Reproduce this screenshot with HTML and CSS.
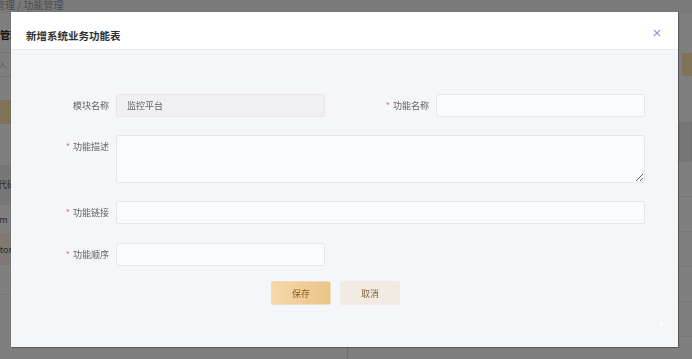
FILE: index.html
```html
<!DOCTYPE html>
<html lang="zh">
<head>
<meta charset="utf-8">
<title>新增系统业务功能表</title>
<link rel="stylesheet" href="styles.css">
</head>
<body>
<div class="page">
  <div class="crumb"><span class="crumb-text">系统管理 / 功能管理</span></div>
  <div class="panels">
    <div class="panel panel-left">
      <div class="p-title"><span class="shift">系统管理</span></div>
      <div class="p-search"><span class="shift ph">请输入</span></div>
      <div class="p-btnrow"><span class="p-btn"></span></div>
      <div class="p-thead"><span class="shift">功能代码</span></div>
      <div class="p-row"><span class="shift2">system</span></div>
      <div class="p-row p-row-hl"><span class="shift2">monitor</span></div>
      <div class="p-row"><span class="shift">业务</span></div>
    </div>
    <div class="panel panel-right">
      <div class="r-top"><span class="r-btn"></span></div>
      <div class="r-thead"></div>
      <div class="r-row"></div>
      <div class="r-row"></div>
      <div class="r-row"></div>
      <div class="r-row"></div>
      <div class="r-row"></div>
    </div>
  </div>
</div>
<div class="overlay"></div>
<div class="dialog">
  <div class="dialog-header">
    <span class="dialog-title">新增系统业务功能表</span>
    <button class="dialog-close" aria-label="关闭">
      <svg width="8" height="8" viewBox="0 0 8 8"><path d="M0.8 0.8 L7.2 7.2 M7.2 0.8 L0.8 7.2" stroke="#8e94dc" stroke-width="1.2" fill="none"/></svg>
    </button>
  </div>
  <div class="dialog-body">
    <form class="form">
      <label class="label">模块名称</label>
      <input class="input input-disabled" value="监控平台" disabled>
      <label class="label"><span class="req">*</span>功能名称</label>
      <input class="input">

      <label class="label"><span class="req">*</span>功能描述</label>
      <textarea class="input textarea span3"></textarea>

      <label class="label"><span class="req">*</span>功能链接</label>
      <input class="input span3">

      <label class="label row4"><span class="req">*</span>功能顺序</label>
      <input class="input row4">
    </form>
    <div class="actions">
      <button class="btn btn-primary" type="button">保存</button>
      <button class="btn btn-cancel" type="button">取消</button>
    </div>
    <span class="dot"></span>
  </div>
</div>
</body>
</html>
```

FILE: styles.css
```css
* { box-sizing: border-box; }
html, body {
  margin: 0;
  padding: 0;
  width: 692px;
  height: 359px;
  overflow: hidden;
  font-family: "Noto Sans CJK SC", "Noto Sans", sans-serif;
  background: #fff;
}

/* ---- background page ---- */
.page { width: 692px; height: 359px; background: #fff; }
.crumb {
  height: 14px;
  background: #f4f4f4;
  font-size: 10px;
  line-height: 10px;
  color: #999;
  overflow: hidden;
  white-space: nowrap;
}
.crumb-text { display: inline-block; margin-left: -25px; margin-top: -3px; }
.panels { display: flex; height: 345px; }
.panel { overflow: hidden; }
.panel-left { width: 348px; border-right: 1px solid #ddd; }
.panel-right { flex: 1; }
.shift { display: inline-block; margin-left: -20px; }
.shift2 { display: inline-block; margin-left: -22px; }
.p-title {
  height: 39px;
  border-bottom: 1px solid #e6e6e6;
  font-size: 10px;
  font-weight: 700;
  color: #222;
  line-height: 42px;
  white-space: nowrap;
}
.p-search {
  height: 24px;
  border-bottom: 1px solid #e6e6e6;
  font-size: 9px;
  line-height: 24px;
  color: #c0c0c0;
  white-space: nowrap;
}
.p-btnrow { height: 88px; padding-top: 23px; }
.p-btn { display: block; width: 60px; height: 24px; background: #ffe6ae; }
.p-thead {
  height: 40px;
  background: #ececec;
  font-size: 9px;
  line-height: 40px;
  color: #555;
  white-space: nowrap;
}
.p-row {
  height: 30px;
  border-bottom: 1px solid #ececec;
  font-size: 9px;
  line-height: 30px;
  color: #555;
  white-space: nowrap;
}
.p-row-hl { background: #fcf3e4; }
.r-top { height: 108px; padding-top: 39px; padding-left: 334px; }
.r-btn { display: block; width: 60px; height: 23px; background: #ffe6ae; }
.r-thead { height: 40px; background: #ececec; border-right: 1px solid #e0e0e0; }
.r-row { height: 35px; border-bottom: 1px solid #ececec; }

.overlay {
  position: fixed;
  inset: 0;
  background: rgba(0, 0, 0, 0.5);
}

/* ---- dialog ---- */
.dialog {
  position: absolute;
  left: 11px;
  top: 12px;
  width: 667px;
  height: 335px;
  background: #f5f6fa;
  box-shadow: 1px 1px 1px rgba(0, 0, 0, 0.25), 0 0 1px rgba(0, 0, 0, 0.2);
  display: flex;
  flex-direction: column;
}
.dialog-header {
  position: relative;
  height: 38px;
  background: #fff;
  border-bottom: 1px solid #e8e9ee;
  padding: 17px 0 0 15px;
}
.dialog-title {
  display: block;
  font-size: 10.5px;
  line-height: 14px;
  font-weight: 700;
  color: #303133;
}
.dialog-close {
  position: absolute;
  right: 17px;
  top: 17px;
  width: 8px;
  height: 8px;
  padding: 0;
  border: 0;
  background: none;
  display: flex;
}

.dialog-body {
  position: relative;
  flex: 1;
  padding-top: 44px;
}
.form {
  display: grid;
  grid-template-columns: 98px 209px 97px 209px;
  column-gap: 7px;
  row-gap: 18px;
  margin: 0;
}
.label {
  justify-self: end;
  align-self: start;
  font-size: 9px;
  line-height: 23px;
  color: #606266;
  white-space: nowrap;
}
.req { color: #f56c6c; margin-right: 3px; }
.input {
  height: 23px;
  border: 1px solid #e4e6ec;
  border-radius: 2px;
  background: #fafbfd;
  font-family: inherit;
  font-size: 9px;
  color: #606266;
  padding: 0 10px;
  outline: none;
  margin: 0;
}
.row4 { margin-top: 1px; }
.input-disabled {
  background: #f0f0f2;
  border-color: #e6e6e8;
  color: #606266;
  -webkit-text-fill-color: #606266;
  opacity: 1;
}
.span3 { grid-column: 2 / 5; }
.textarea { height: 48px; resize: vertical; padding: 4px 10px; display: block; }

.actions {
  display: flex;
  gap: 9px;
  padding-left: 260px;
  margin-top: 15px;
}
.btn {
  width: 60px;
  height: 24px;
  border-radius: 2px;
  font-family: inherit;
  font-size: 9px;
  padding: 0;
  cursor: pointer;
}
.btn-primary {
  background: linear-gradient(90deg, #f6d8a9, #ebc488);
  border: 1px solid #f1dcbc;
  color: #8a5a22;
}
.btn-cancel {
  background: #f2ebe3;
  border: 1px solid #f2ebe3;
  color: #8a6336;
}
.dot {
  position: absolute;
  left: 649px;
  top: 272px;
  width: 3px;
  height: 3px;
  background: #fff;
}
```
